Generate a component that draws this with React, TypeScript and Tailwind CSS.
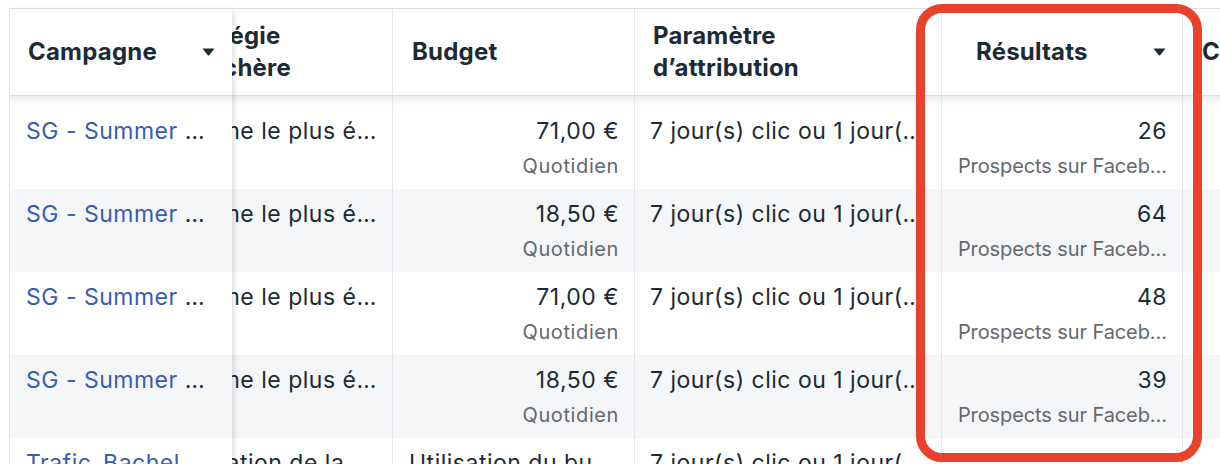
import React from 'react';

interface Row {
  name: string;
  strategy: string;
  budget: string;
  budgetType?: string;
  attribution: string;
  results?: string;
  resultType?: string;
}

const rows: Row[] = [
  { name: 'SG - Summer', strategy: 'Volume le plus é…', budget: '71,00 €', budgetType: 'Quotidien', attribution: '7 jour(s) clic ou 1 jour(…', results: '26', resultType: 'Prospects sur Faceb…' },
  { name: 'SG - Summer', strategy: 'Volume le plus é…', budget: '18,50 €', budgetType: 'Quotidien', attribution: '7 jour(s) clic ou 1 jour(…', results: '64', resultType: 'Prospects sur Faceb…' },
  { name: 'SG - Summer', strategy: 'Volume le plus é…', budget: '71,00 €', budgetType: 'Quotidien', attribution: '7 jour(s) clic ou 1 jour(…', results: '48', resultType: 'Prospects sur Faceb…' },
  { name: 'SG - Summer', strategy: 'Volume le plus é…', budget: '18,50 €', budgetType: 'Quotidien', attribution: '7 jour(s) clic ou 1 jour(…', results: '39', resultType: 'Prospects sur Faceb…' },
  { name: 'Trafic_Bachel', strategy: 'Utilisation de la…', budget: 'Utilisation du bu…', attribution: '7 jour(s) clic ou 1 jour(…' },
];

const Caret = () => (
  <svg width="13" height="8" viewBox="0 0 13 8" className="shrink-0">
    <path d="M0.5 0.5h12L7.2 7.2a1 1 0 0 1-1.4 0z" fill="#1c2b33" />
  </svg>
);

const headText = 'text-[24px] font-bold leading-[32px] text-[#1c2b33] tracking-[0.2px] whitespace-nowrap';
const mainText = 'text-[23px] leading-[28px] text-[#1c2b33] whitespace-nowrap overflow-hidden tracking-[0.5px]';
const subText = 'text-[20px] leading-[26px] text-[#65686c] whitespace-nowrap overflow-hidden mt-[8px]';

export default function App() {
  return (
    <div
      className="relative w-[1220px] h-[464px] overflow-hidden bg-white"
      style={{ fontFamily: 'Inter, "Noto Sans", sans-serif' }}
    >
      <div className="pt-[8px] pl-[9px] flex">
        {/* Sticky campaign column */}
        <div className="relative z-10 w-[223px] shrink-0 border-l border-[#e3e5e8] shadow-[5px_0_6px_-3px_rgba(0,0,0,0.14)]">
          <div className="h-[88px] border-t border-b border-[#dadde1] bg-white flex items-center justify-between pl-[18px] pr-[17px]">
            <span className={headText}>Campagne</span>
            <Caret />
          </div>
          <div className="h-[10px] bg-gradient-to-b from-[#eceef1] to-white" />
          {rows.map((r, i) => (
            <div
              key={i}
              className={`h-[83px] pl-[16px] pr-[10px] pt-[11px] ${i % 2 === 1 ? 'bg-[#f5f6f7]' : 'bg-white'}`}
            >
              <div className={mainText}>
                <span className="text-[#385cb5]">{r.name}</span>
                <span> …</span>
              </div>
            </div>
          ))}
        </div>

        {/* Scrolled area */}
        <div className="flex-1 overflow-hidden">
          <div className="-ml-[78px] w-[1320px]">
            <div className="h-[88px] border-t border-b border-[#dadde1] flex">
              <div className="w-[239px] shrink-0 border-r border-[#e3e5e8] flex items-center pl-[18px]">
                <span className={headText}>
                  Stratégie
                  <br />
                  d’enchère
                </span>
              </div>
              <div className="w-[242px] shrink-0 border-r border-[#e3e5e8] flex items-center pl-[19px]">
                <span className={headText}>Budget</span>
              </div>
              <div className="w-[307px] shrink-0 border-r border-[#e3e5e8] flex items-center pl-[18px]">
                <span className={headText}>
                  Paramètre
                  <br />
                  d’attribution
                </span>
              </div>
              <div className="w-[241px] shrink-0 border-r border-[#e3e5e8] flex items-center justify-between pl-[34px] pr-[16px]">
                <span className={headText}>Résultats</span>
                <Caret />
              </div>
              <div className="w-[220px] shrink-0 flex items-center pl-[19px]">
                <span className={headText}>Coût par résultat</span>
              </div>
            </div>
            <div className="h-[10px] flex">
              <div className="w-[239px] border-r border-[#e3e5e8] bg-gradient-to-b from-[#eceef1] to-white" />
              <div className="w-[242px] border-r border-[#e3e5e8] bg-gradient-to-b from-[#eceef1] to-white" />
              <div className="w-[307px] border-r border-[#e3e5e8] bg-gradient-to-b from-[#eceef1] to-white" />
              <div className="w-[241px] border-r border-[#e3e5e8] bg-gradient-to-b from-[#eceef1] to-white" />
              <div className="w-[220px] bg-gradient-to-b from-[#eceef1] to-white" />
            </div>
            {rows.map((r, i) => (
              <div key={i} className={`h-[83px] flex ${i % 2 === 1 ? 'bg-[#f5f6f7]' : 'bg-white'}`}>
                <div className="w-[239px] shrink-0 border-r border-[#e3e5e8] pl-[16px] pr-[10px] pt-[11px]">
                  <div className={mainText}>{r.strategy}</div>
                </div>
                <div className="w-[242px] shrink-0 border-r border-[#e3e5e8] pl-[16px] pr-[15px] pt-[11px] flex flex-col items-end">
                  {r.budgetType ? (
                    <>
                      <div className={mainText}>{r.budget}</div>
                      <div className={`${subText} tracking-[0.6px]`}>{r.budgetType}</div>
                    </>
                  ) : (
                    <div className={`${mainText} self-start`}>{r.budget}</div>
                  )}
                </div>
                <div className="w-[307px] shrink-0 border-r border-[#e3e5e8] pl-[15px] pr-[12px] pt-[11px]">
                  <div className={mainText}>{r.attribution}</div>
                </div>
                <div className="w-[241px] shrink-0 border-r border-[#e3e5e8] pl-[14px] pr-[15px] pt-[11px] flex flex-col items-end">
                  {r.results && <div className={mainText}>{r.results}</div>}
                  {r.resultType && <div className={`${subText} tracking-[-0.1px]`}>{r.resultType}</div>}
                </div>
                <div className="w-[220px] shrink-0" />
              </div>
            ))}
          </div>
        </div>
      </div>

      {/* Highlight around the results column */}
      <div className="absolute left-[916px] top-[4px] w-[286px] h-[458px] border-[9px] border-[#e8412c] rounded-[26px] pointer-events-none" />
    </div>
  );
}
